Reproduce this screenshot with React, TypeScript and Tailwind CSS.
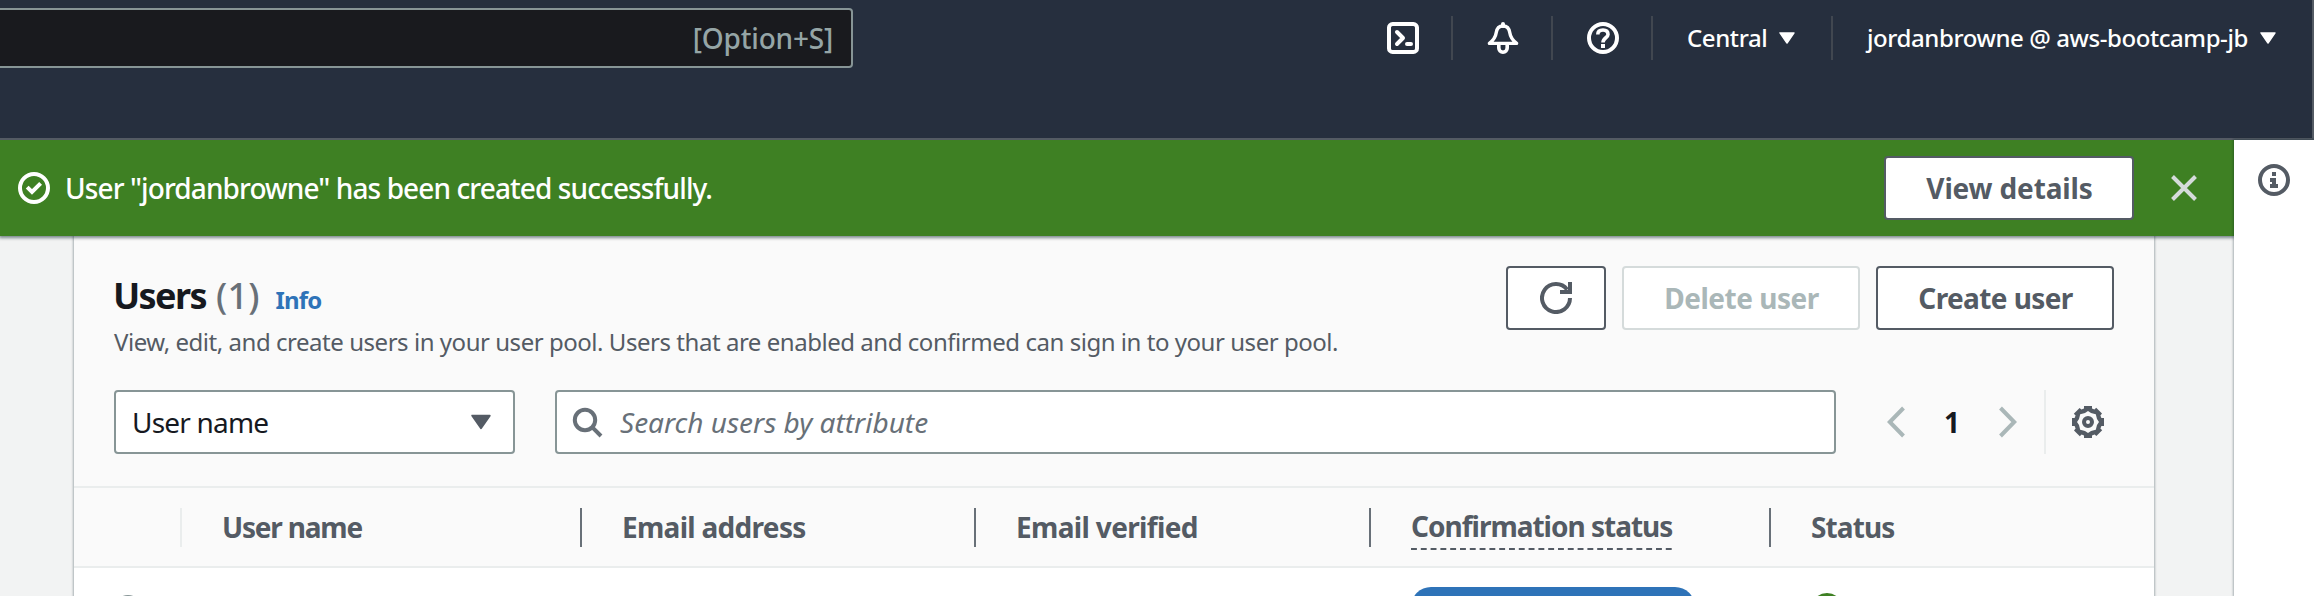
import type { ReactNode } from "react";

function Icon({ children, className = "" }: { children: ReactNode; className?: string }) {
  return (
    <svg viewBox="0 0 16 16" className={`size-8 shrink-0 ${className}`} fill="none" stroke="currentColor" strokeWidth={2}>
      {children}
    </svg>
  );
}

const ShellIcon = () => (
  <Icon>
    <rect x="1" y="1" width="14" height="14" rx="1.8" />
    <path d="M5 5l3 3-3 3M10 11h2" strokeLinecap="round" strokeLinejoin="round" />
  </Icon>
);

const BellIcon = () => (
  <Icon>
    <path
      d="M1.2 10.7h13.6C12.6 9 11.7 7.6 11.4 5.4 11.1 3.2 10 2 8 2S4.9 3.2 4.6 5.4C4.3 7.6 3.4 9 1.2 10.7Z"
      strokeWidth={1.7}
      strokeLinejoin="round"
    />
    <path d="M8 2V1" strokeLinecap="round" />
    <path d="M5.9 11v2a2.1 2.1 0 0 0 4.2 0v-2" strokeWidth={1.8} />
  </Icon>
);

const HelpIcon = () => (
  <Icon>
    <circle cx="8" cy="8" r="7" />
    <path d="M5.4 6.3C5.4 4.8 6.4 4 8 4s2.5.9 2.5 2.2C10.5 7.9 8 7.900 8 10.2" strokeWidth={1.8} />
    <path d="M8 11v2" />
  </Icon>
);

const CheckIcon = () => (
  <Icon>
    <circle cx="8" cy="8" r="7" />
    <path d="M4.6 7.6 7 10l4.300-4.300" />
  </Icon>
);

const InfoIcon = () => (
  <Icon>
    <circle cx="8" cy="8" r="7" />
    <path d="M7 4h2v2H7zM6 7h3v3h1v2H6v-2h1V9H6z" fill="currentColor" stroke="none" />
  </Icon>
);

const RefreshIcon = () => (
  <Icon>
    <path d="M15 8a7 7 0 1 1-1.400-4.200" />
    <path d="M10 5h5V0" />
  </Icon>
);

const SearchIcon = () => (
  <Icon>
    <circle cx="7" cy="7" r="5.1" />
    <path d="m10.7 10.7 4.300 4.300" />
  </Icon>
);

const GearIcon = () => (
  <Icon>
    <path
      fillRule="evenodd"
      stroke="none"
      fill="currentColor"
      d="M6 0h4v1.300l1.200.5.900-.9 2.900 2.900-.8.900.5 1.300H16v4h-1.300l-.5 1.200.9.900-2.900 2.900-.9-.8-1.300.5V16H6v-1.300l-1.200-.5-.9.900L1 12.200l.8-.9L1.300 10H0V6h1.300l.5-1.200-.9-.9L3.800 1l.9.800L6 1.300ZM8 2.500 6.500 3.500 4.100 4.100 3.500 6.500 2.500 8l1 1.500.6 2.400 2.400.6L8 13.500l1.500-1 2.400-.6.600-2.400L13.500 8l-1-1.500-.6-2.400-2.400-.6Z"
    />
    <circle cx="8" cy="8" r="2" />
  </Icon>
);

const Caret = ({ className = "" }: { className?: string }) => (
  <svg viewBox="0 0 16 12" className={`shrink-0 ${className}`} fill="currentColor" stroke="currentColor" strokeLinejoin="round" strokeWidth={1.5}>
    <path d="M1 .9h14L8 11Z" />
  </svg>
);

const NavDivider = () => <div className="h-11 w-0.5 shrink-0 bg-[#414750]" />;

function Button({ children, className = "" }: { children: ReactNode; className?: string }) {
  return (
    <button
      className={`flex h-16 shrink-0 items-center justify-center whitespace-nowrap rounded border-2 bg-white text-[28px] font-bold ${className}`}
    >
      {children}
    </button>
  );
}

const Column = ({ label, divider, className }: { label?: ReactNode; divider?: string; className: string }) => (
  <div className={`flex h-full shrink-0 items-center justify-between ${className}`}>
    <div className="whitespace-nowrap">{label}</div>
    {divider && <div className={`h-[39px] w-0.5 ${divider}`} />}
  </div>
);

function TopBar() {
  return (
    <header className="flex h-[140px] shrink-0 items-start border-b-2 border-r-2 border-[#545b64] bg-[#262f3e]">
      <div className="mt-2 flex h-[60px] w-[853px] shrink-0 items-center justify-end rounded-r border-2 border-l-0 border-[#879596] bg-[#191a1e] pr-[18px] text-[28px] font-medium tracking-[-0.2px] text-[#95a5a6]">
        [Option+S]
      </div>
      <nav className="ml-auto flex h-[76px] items-center text-2xl font-medium text-white">
        <div className="px-8"><ShellIcon /></div>
        <NavDivider />
        <div className="pl-[34px] pr-8"><BellIcon /></div>
        <NavDivider />
        <div className="pl-[34px] pr-8"><HelpIcon /></div>
        <NavDivider />
        <div className="flex w-[178px] items-center justify-between pl-[34px] pr-9">
          <span className="tracking-[-0.4px]">Central</span>
          <Caret className="h-3 w-4" />
        </div>
        <NavDivider />
        <div className="flex w-[479px] items-center justify-between pl-[34px] pr-9">
          <span className="whitespace-nowrap tracking-[-0.42px]">jordanbrowne @ aws-bootcamp-jb</span>
          <Caret className="h-3 w-4" />
        </div>
      </nav>
    </header>
  );
}

function Flash() {
  return (
    <div className="z-10 flex h-24 shrink-0 items-center bg-[#3e8023] pl-[18px] pr-[37px] text-white shadow-[0_1px_3px_1px_rgba(0,28,36,0.5)]">
      <CheckIcon />
      <span className="ml-[15px] text-[28px] font-medium tracking-[-0.9px]">
        User "jordanbrowne" has been created successfully.
      </span>
      <Button className="ml-auto w-[250px] border-[#545b64] pl-px tracking-[-0.15px] text-[#545b64]">View details</Button>
      <svg viewBox="0 0 26 26" className="ml-[37px] size-[26px]" stroke="#d5dbdb" strokeWidth={4}>
        <path d="M1.5 1.5l23 23M24.5 1.5l-23 23" />
      </svg>
    </div>
  );
}

function UsersTable() {
  return (
    <main className="ml-[74px] mr-20 flex flex-1 flex-col bg-white shadow-[0_0_2px_1px_rgba(0,28,36,0.3)]">
      <div className="flex h-[250px] shrink-0 flex-col bg-[#fafafa] px-10 pt-[30px]">
        <div className="flex h-[124px] items-start">
          <div className="flex-1">
            <h1 className="flex h-[60px] items-baseline">
              <span className="ml-[-1px] text-4xl leading-[60px] font-bold tracking-[-1.6px] text-[#16191f]">Users</span>
              <span className="ml-[10px] text-4xl leading-[60px] font-medium tracking-[0.2px] text-[#687078]">(1)</span>
              <a className="ml-4 text-2xl leading-[60px] font-bold tracking-[-0.9px] text-[#2e73b8]">Info</a>
            </h1>
            <p className="whitespace-nowrap text-2xl leading-8 tracking-[-0.46px] text-[#545b64]">
              View, edit, and create users in your user pool. Users that are enabled and confirmed can sign in to your user pool.
            </p>
          </div>
          <div className="flex gap-4">
            <Button className="w-[100px] border-[#545b64] text-[#545b64]"><RefreshIcon /></Button>
            <Button className="w-[238px] border-[#d5dbdb] pl-px tracking-[-0.5px] text-[#aab7b8]">Delete user</Button>
            <Button className="w-[238px] border-[#545b64] pl-px tracking-[-0.6px] text-[#545b64]">Create user</Button>
          </div>
        </div>
        <div className="flex h-16 items-center text-[28px]">
          <div className="flex h-16 w-[401px] shrink-0 items-center justify-between rounded border-2 border-[#879596] bg-white pl-4 pr-[22px] tracking-[-0.8px] text-[#16191f]">
            User name
            <Caret className="h-4 w-5 text-[#545b64]" />
          </div>
          <div className="ml-10 flex h-16 w-[1281px] shrink-0 items-center rounded border-2 border-[#879596] bg-white pl-[14px] text-[#687078]">
            <SearchIcon />
            <span className="ml-[17px] italic">Search users by attribute</span>
          </div>
          <svg viewBox="0 0 18 32" className="ml-[51px] h-8 w-[18px]" fill="none" stroke="#aab7b8" strokeWidth={4}>
            <path d="M16.5 2 2.8 16l13.7 14" />
          </svg>
          <span className="w-[94px] text-center font-bold text-[#16191f]">1</span>
          <svg viewBox="0 0 18 32" className="h-8 w-[18px]" fill="none" stroke="#aab7b8" strokeWidth={4}>
            <path d="M1.5 2l13.7 14L1.5 30" />
          </svg>
          <div className="ml-[27px] h-16 w-0.5 bg-[#eaeded]" />
          <div className="ml-[26px] text-[#545b64]"><GearIcon /></div>
        </div>
      </div>
      <div className="flex h-[82px] shrink-0 border-y-2 border-[#eaeded] bg-[#fafafa] text-[28px] font-bold text-[#545b64]">
        <Column className="w-[108px]" divider="bg-[#eaeded]" />
        <Column className="w-[400px] pl-10 tracking-[-1.2px]" divider="bg-[#687078]" label="User name" />
        <Column className="w-[394px] pl-10 tracking-[-0.7px]" divider="bg-[#687078]" label="Email address" />
        <Column className="w-[395px] pl-10 tracking-[-0.65px]" divider="bg-[#687078]" label="Email verified" />
        <Column
          className="w-[400px] pl-10 tracking-[-1px]"
          divider="bg-[#687078]"
          label={
            <span className="flex h-[46px] flex-col">
              <span className="h-[42px] leading-[44px]">Confirmation status</span>
              <svg viewBox="0 0 262 2" className="mt-0.5 h-0.5 w-[262px]">
                <path d="M0 1h262" stroke="#545b64" strokeWidth={2} strokeDasharray="5.9 3.9" />
              </svg>
            </span>
          }
        />
        <Column className="w-[383px] pl-10 tracking-[-0.9px]" label="Status" />
      </div>
      <div className="flex h-[60px] items-start">
        <div className="ml-10 mt-[27px] size-7 rounded-full border-2 border-[#879596]" />
        <div className="ml-[1269px] mt-[19px] h-10 w-[284px] rounded-[20px] bg-[#2e73b8]" />
        <div className="ml-[116px] mt-[25px] size-8 rounded-full border-4 border-[#3e8023]" />
      </div>
    </main>
  );
}

export default function App() {
  return (
    <div className="flex h-[596px] w-[2314px] flex-col overflow-hidden bg-white font-['Noto_Sans',sans-serif]">
      <TopBar />
      <div className="flex h-[456px]">
        <div className="flex w-[2234px] shrink-0 flex-col overflow-hidden bg-[#f2f3f3]">
          <Flash />
          <UsersTable />
        </div>
        <aside className="z-20 flex w-20 flex-col items-center bg-white pt-6 text-[#545b64] shadow-[0_0_2px_1px_rgba(0,28,36,0.3)]">
          <InfoIcon />
        </aside>
      </div>
    </div>
  );
}
